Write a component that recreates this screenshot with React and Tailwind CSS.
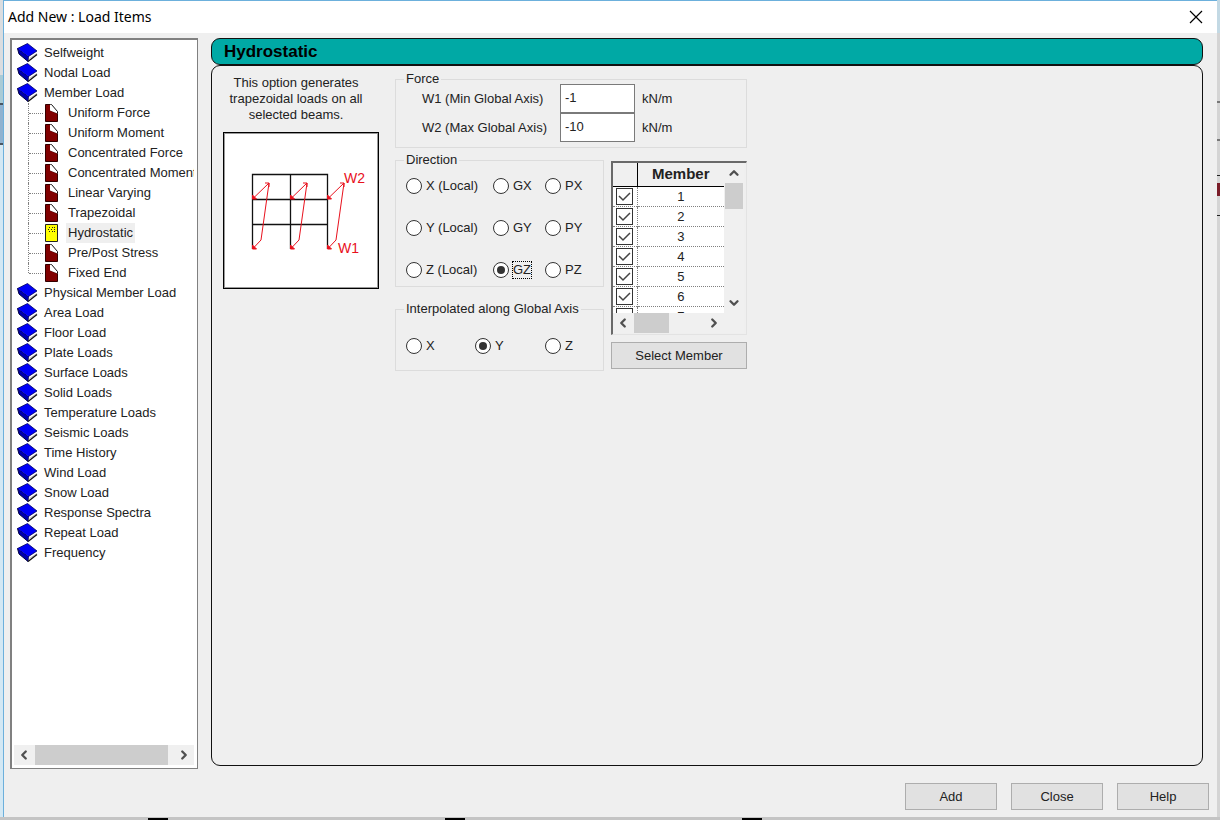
import React, { useState } from "react";
import { ChevronDown, ChevronLeft, ChevronRight, ChevronUp } from "lucide-react";

const memberLoads = [
  "Uniform Force",
  "Uniform Moment",
  "Concentrated Force",
  "Concentrated Moment",
  "Linear Varying",
  "Trapezoidal",
  "Hydrostatic",
  "Pre/Post Stress",
  "Fixed End",
];

const loadTypes = [
  { label: "Selfweight" },
  { label: "Nodal Load" },
  { label: "Member Load", children: memberLoads },
  { label: "Physical Member Load" },
  { label: "Area Load" },
  { label: "Floor Load" },
  { label: "Plate Loads" },
  { label: "Surface Loads" },
  { label: "Solid Loads" },
  { label: "Temperature Loads" },
  { label: "Seismic Loads" },
  { label: "Time History" },
  { label: "Wind Load" },
  { label: "Snow Load" },
  { label: "Response Spectra" },
  { label: "Repeat Load" },
  { label: "Frequency" },
];

const directions = [
  "X (Local)",
  "GX",
  "PX",
  "Y (Local)",
  "GY",
  "PY",
  "Z (Local)",
  "GZ",
  "PZ",
];

const members = [1, 2, 3, 4, 5, 6, 7];

const BookIcon = () => (
  <svg width="21" height="20" viewBox="0 0 21 20" className="shrink-0">
    <path d="M.5 5.500 2 11l9 7.500 1-4.500z" fill="#0000b0" stroke="#000040" />
    <path d="M12 13.500l8-5.500v3.500L11.500 18z" fill="#fff" />
    <path d="M12.500 15.500l7.500-5" stroke="#bbb" />
    <path d="M20 11.500 11 18.500" stroke="#111" strokeWidth="1.300" />
    <path d="M.5 5.500 10.500.5l9.500 7.500-8.500 5.500z" fill="#0000f8" />
    <path
      d="M.5 5.500 10.500.5l9.500 7.500-8.500 5.500"
      fill="none"
      stroke="#000060"
      strokeWidth=".8"
    />
  </svg>
);

const PageIcon = () => (
  <svg width="14" height="20" viewBox="0 0 14 20" className="shrink-0">
    <path d="M.5 1.500h5v6l7 3v8H.5z" fill="#800000" stroke="#300" />
    <path d="M5 1.500h1.500l6 7v2L5 7.500z" fill="#fff" />
    <path d="M5.500 1.500h1l6 7v2" fill="none" stroke="#111" />
  </svg>
);

const OpenPageIcon = () => (
  <svg width="14" height="20" viewBox="0 0 14 20" className="shrink-0">
    <path d="M.5 1.500h12v17H.5z" fill="#ff0" stroke="#222" />
    <path
      d="M4 4.500h1m2 0h1m1 0h1M3 6.500h1m2 0h1m2 0h1M4 8.500h1m2 0h1m1 0h1"
      stroke="#222"
    />
  </svg>
);

const BeamDiagram = () => (
  <svg
    width="156"
    height="157"
    viewBox="1 0 154 155"
    className="border border-black bg-white outline-1 -outline-offset-2 outline-black/40"
  >
    <path
      d="M29.500 116V41.500h75V116M29.500 66.500h75M29.500 91.500h75M67.500 41.500V116"
      fill="none"
      stroke="#111"
      strokeWidth="1.300"
    />
    {[1, 39, 76].map((x) => (
      <g key={x} transform={`translate(${x} 0)`} fill="none" stroke="#e8101c">
        <path d="M28.500 66 45 50l-8 57-8.500 9" />
        <path d="M45 54v-4h-4" />
        <path d="M28.500 62v4h4zM28.500 112v4h4z" fill="#e8101c" />
      </g>
    ))}
    <g fill="#e8101c" fontSize="14" fontFamily="Liberation Sans, sans-serif">
      <text x="121" y="50">W2</text>
      <text x="115" y="120">W1</text>
    </g>
  </svg>
);

const Radio = ({ name, label, checked, onChange, focused }) => (
  <label className="flex h-5 items-center gap-1">
    <input
      type="radio"
      name={name}
      checked={checked}
      onChange={onChange}
      className="
        flex
        size-4
        shrink-0
        appearance-none
        items-center
        justify-center
        rounded-full
        border
        border-[#333]
        bg-white
        checked:before:size-2
        checked:before:rounded-full
        checked:before:bg-[#333]
        checked:before:content-['']
      "
    />
    <span
      className={
        focused && checked ? "outline-1 outline-dotted outline-black" : ""
      }
    >
      {label}
    </span>
  </label>
);

const Group = ({ title, className, children }) => (
  <fieldset className={`border border-[#dcdcdc] px-[10px] ${className}`}>
    <legend className="-ml-[2px] px-[2px] leading-4 whitespace-nowrap">
      {title}
    </legend>
    {children}
  </fieldset>
);

const ActionButton = ({ children, className = "w-[92px]" }) => (
  <button
    type="button"
    className={`h-[27px] border border-[#adadad] bg-[#e1e1e1] ${className}`}
  >
    {children}
  </button>
);

const ScrollArrow = ({ icon: Icon, label }) => (
  <button
    type="button"
    aria-label={label}
    className="flex size-5 shrink-0 items-center justify-center text-[#505050]"
  >
    <Icon size={14} strokeWidth={4} />
  </button>
);

const LoadTree = ({ selected, setSelected }) => (
  <nav
    aria-label="Load types"
    className="flex w-[188px] shrink-0 flex-col border-2 border-r border-b border-[#808080] bg-white pr-[3px] pb-[3px]"
  >
    <ul className="flex-1 overflow-hidden pt-[3px] pl-[5px] whitespace-nowrap">
      {loadTypes.map((type) => (
        <li key={type.label}>
          <button type="button" className="flex h-5 items-center gap-[6px]">
            <BookIcon />
            {type.label}
          </button>
          {type.children && (
            <ul className="pl-[11px]">
              {type.children.map((child, i) => (
                <li key={child} className="flex h-5">
                  <span
                    className={`w-px border-l border-dotted border-[#808080] ${
                      i === type.children.length - 1 ? "h-[10px]" : ""
                    }`}
                  />
                  <span className="mt-[10px] mr-[2px] w-[14px] shrink-0 border-t border-dotted border-[#808080]" />
                  <button
                    type="button"
                    onClick={() => setSelected(child)}
                    className="flex h-5 items-center gap-[7px]"
                  >
                    {child === selected ? <OpenPageIcon /> : <PageIcon />}
                    <span
                      className={
                        child === selected
                          ? "bg-[#efefef] px-[2px] leading-5"
                          : "px-[2px] leading-5"
                      }
                    >
                      {child}
                    </span>
                  </button>
                </li>
              ))}
            </ul>
          )}
        </li>
      ))}
    </ul>
    <div className="ml-[2px] flex bg-[#f0f0f0]">
      <ScrollArrow icon={ChevronLeft} label="Scroll left" />
      <div className="h-5 flex-1 pr-[6px] pl-px">
        <div className="h-5 bg-[#cdcdcd]" />
      </div>
      <ScrollArrow icon={ChevronRight} label="Scroll right" />
    </div>
  </nav>
);

const MemberTable = ({ checked, toggle }) => (
  <div className="h-[174px] border-2 border-r border-b border-[#696969] border-r-[#e3e3e3] border-b-[#e3e3e3] pr-[2px]">
    <div className="flex h-[150px]">
      <div className="flex-1 overflow-hidden bg-white">
        <table className="w-full table-fixed border-collapse text-center">
          <thead>
            <tr className="h-[23px] border-b border-black bg-[#f0f0f0] text-[15px]">
              <th className="w-6 border-r border-black" />
              <th className="font-bold">Member</th>
            </tr>
          </thead>
          <tbody>
            {members.map((member) => (
              <tr
                key={member}
                className="h-5 border-b border-dotted border-[#808080]"
              >
                <td className="border-r border-dotted border-[#808080]">
                  <label className="relative mx-auto block size-[17px]">
                    <input
                      type="checkbox"
                      aria-label={`Member ${member}`}
                      checked={checked.has(member)}
                      onChange={() => toggle(member)}
                      className="block size-[17px] appearance-none border border-[#333] bg-white"
                    />
                    {checked.has(member) && (
                      <svg
                        viewBox="0 0 17 17"
                        className="pointer-events-none absolute inset-0"
                      >
                        <path
                          d="M3 8l4 4 7-7"
                          fill="none"
                          stroke="#444"
                          strokeWidth="1.500"
                        />
                      </svg>
                    )}
                  </label>
                </td>
                <td className="leading-[19px]">{member}</td>
              </tr>
            ))}
          </tbody>
        </table>
      </div>
      <div className="flex w-5 flex-col justify-between bg-[#f0f0f0]">
        <div>
          <ScrollArrow icon={ChevronUp} label="Scroll up" />
          <div className="mx-auto h-[26px] w-[18px] bg-[#cdcdcd]" />
        </div>
        <ScrollArrow icon={ChevronDown} label="Scroll down" />
      </div>
    </div>
    <div className="flex bg-[#f0f0f0] pr-5">
      <ScrollArrow icon={ChevronLeft} label="Scroll left" />
      <div className="flex-1">
        <div className="ml-px h-5 w-[35px] bg-[#cdcdcd]" />
      </div>
      <ScrollArrow icon={ChevronRight} label="Scroll right" />
    </div>
  </div>
);

const App = () => {
  const [selected, setSelected] = useState("Hydrostatic");
  const [w1, setW1] = useState("-1");
  const [w2, setW2] = useState("-10");
  const [direction, setDirection] = useState("GZ");
  const [axis, setAxis] = useState("Y");
  const [checked, setChecked] = useState(new Set([1, 2, 3, 4, 5, 6]));

  const toggle = (member) => {
    const next = new Set(checked);
    if (!next.delete(member)) next.add(member);
    setChecked(next);
  };

  const forces = [
    { id: "w1", label: "W1 (Min Global Axis)", value: w1, set: setW1 },
    { id: "w2", label: "W2 (Max Global Axis)", value: w2, set: setW2 },
  ];

  return (
    <div className="flex min-h-screen flex-col bg-[#c8c8c8] font-['Liberation_Sans',sans-serif] text-[13px] leading-4 text-[#222]">
      <div className="flex flex-1">
        {/* slivers of the window behind the dialog */}
        <div className="flex w-[3px] flex-col bg-[#d3e8f4]">
          <span className="h-[75px] bg-[#dadde0]" />
          <span className="h-7 bg-[#a9cbd6]" />
          <span className="h-[42px] border-y-2 border-[#4a5560] bg-[#8fb2d0]" />
        </div>
        <div className="flex flex-1 flex-col border-t border-l border-[#6cb0dc] bg-[#efefef]">
          <header className="flex h-8 items-center justify-between bg-white pr-[14px] pl-1">
            <h1 className="pb-px font-['Noto_Sans',sans-serif] text-[14px] text-black">
              Add New : Load Items
            </h1>
            <button type="button" aria-label="Close window">
              <svg width="14" height="14" viewBox="0 0 14 14">
                <path d="M1 1l12 12M13 1 1 13" stroke="#000" strokeWidth="1.200" />
              </svg>
            </button>
          </header>

          <main className="flex flex-1 gap-[13px] pt-[5px] pr-[14px] pl-[6px]">
            <LoadTree selected={selected} setSelected={setSelected} />

            <section className="flex flex-1 flex-col pb-[3px]">
              <h2 className="h-[27px] rounded-[9px] border border-[#111] bg-[#00a9a5] pl-3 text-[17px] leading-[25px] font-bold text-black">
                {selected}
              </h2>
              <div className="flex flex-1 items-start gap-4 rounded-[9px] border border-[#111] px-[11px] pt-[5px]">
                <div className="w-[156px]">
                  <p className="pt-1 pr-[10px] pb-[9px] text-center">
                    This option generates trapezoidal loads on all selected
                    beams.
                  </p>
                  <BeamDiagram />
                </div>

                <div className="w-[352px]">
                  <Group title="Force" className="h-[77px]">
                    <div className="-mt-[3px]">
                      {forces.map((force) => (
                        <div
                          key={force.id}
                          className="flex h-[29px] items-center whitespace-nowrap"
                        >
                          <label htmlFor={force.id} className="w-[138px] pl-4">
                            {force.label}
                          </label>
                          <input
                            id={force.id}
                            value={force.value}
                            onChange={(e) => force.set(e.target.value)}
                            className="ml-4 h-[29px] w-[75px] border border-[#7a7a7a] bg-white px-1 pb-[3px]"
                          />
                          <span className="ml-[7px]">kN/m</span>
                        </div>
                      ))}
                    </div>
                  </Group>

                  <div className="mt-1 flex gap-[7px]">
                    <div className="w-[209px]">
                      <Group title="Direction" className="h-[135px]">
                        <div className="grid grid-cols-[87px_52px_auto] gap-y-[22px] pt-2">
                          {directions.map((label) => (
                            <Radio
                              key={label}
                              name="direction"
                              label={label}
                              checked={direction === label}
                              onChange={() => setDirection(label)}
                              focused
                            />
                          ))}
                        </div>
                      </Group>
                      <Group
                        title="Interpolated along Global Axis"
                        className="mt-[14px] h-[70px]"
                      >
                        <div className="grid grid-cols-[69px_70px_auto] pt-[19px]">
                          {["X", "Y", "Z"].map((label) => (
                            <Radio
                              key={label}
                              name="axis"
                              label={label}
                              checked={axis === label}
                              onChange={() => setAxis(label)}
                            />
                          ))}
                        </div>
                      </Group>
                    </div>

                    <div className="flex flex-1 flex-col gap-[7px] pt-[9px]">
                      <MemberTable checked={checked} toggle={toggle} />
                      <ActionButton className="w-full">
                        Select Member
                      </ActionButton>
                    </div>
                  </div>
                </div>
              </div>
            </section>
          </main>

          <footer className="flex justify-end gap-[14px] pt-[14px] pr-2 pb-[7px]">
            <ActionButton>Add</ActionButton>
            <ActionButton>Close</ActionButton>
            <ActionButton>Help</ActionButton>
          </footer>
        </div>
        <div className="flex w-[3px] flex-col bg-[#d4d4d4]">
          <span className="h-[33px] bg-[#c3d9e4]" />
          <span className="h-[70px] border-b-2 border-[#777]" />
          <span className="h-[38px] border-b-2 border-[#777]" />
          <span className="h-[35px] border-b border-[#222]" />
          <span className="mt-[7px] h-[13px] bg-[#7a1c28]" />
          <span className="h-[20px] border-b border-[#222]" />
        </div>
      </div>
      <div className="flex h-[3px] gap-[277px] bg-[#c4c4c4] pl-[148px]">
        <span className="w-5 border-b-2 border-black" />
        <span className="w-5 border-b-2 border-black" />
        <span className="w-5 border-b-2 border-black" />
      </div>
    </div>
  );
};

export default App;
